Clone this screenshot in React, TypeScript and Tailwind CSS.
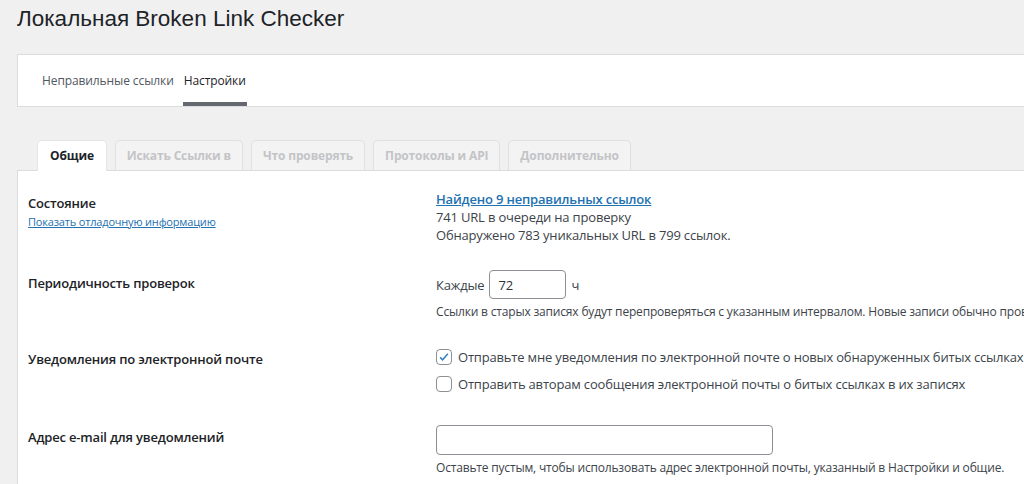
import React from "react";

const font = { fontFamily: '"Open Sans", "Noto Sans", sans-serif' };

export default function App() {
  return (
    <div className="min-h-[484px] w-[1024px] overflow-hidden bg-[#f0f0f1] text-[#3c434a]" style={font}>
      <div className="pl-[17px] pt-[4px]">
        <h1 className="text-[22.5px] leading-[29px] text-[#1d2327] font-normal" style={{ fontFamily: '"Liberation Sans", Arial, sans-serif' }}>
          Локальная Broken Link Checker
        </h1>
        <div className="mt-[21px] h-[53px] border-y border-l border-[#dcdcde] bg-white flex items-end pl-[24px] gap-[10px] text-[12px]">
          <div className="h-full flex items-center pt-[1px] text-[#50575e] tracking-[-0.1px]">Неправильные ссылки</div>
          <div className="h-full flex flex-col justify-between">
            <div className="flex-1 flex items-center pt-[5px] text-[#1d2327] tracking-[-0.1px]">Настройки</div>
            <div className="h-[4px] bg-[#646970] -mx-[1px]" />
          </div>
        </div>

        <div className="mt-[33px] flex items-end gap-[8px] pl-[20px] text-[12px] font-bold relative z-10 tracking-[-0.15px]">
          <div className="h-[31px] px-[12px] rounded-t-[5px] bg-white border border-b-0 border-[#e5e5e5] text-[#1d2327] flex items-center -mb-px">Общие</div>
          {["Искать Ссылки в", "Что проверять", "Протоколы и API", "Дополнительно"].map((t) => (
            <div key={t} className="h-[30px] px-[11px] rounded-t-[5px] bg-[#f3f3f3] border border-b-0 border-[#e0e0e0] text-[#c3c4c7] flex items-center">
              {t}
            </div>
          ))}
        </div>

        <div className="bg-white border-t border-l border-[#dcdcde] h-[320px] pl-[10px] pt-[19px] text-[13px] leading-[18px] tracking-[-0.18px]">
          {/* Состояние */}
          <div className="flex">
            <div className="w-[408px] shrink-0 pt-[4px]">
              <div className="font-semibold text-[#1d2327] text-[13px]">Состояние</div>
              <a className="text-[11px] text-[#2271b1] underline leading-[15px]" href="#">Показать отладочную информацию</a>
            </div>
            <div>
              <a className="font-semibold text-[#2271b1] underline" href="#">Найдено 9 неправильных ссылок</a>
              <div>741 URL в очереди на проверку</div>
              <div>Обнаружено 783 уникальных URL в 799 ссылок.</div>
            </div>
          </div>

          {/* Периодичность */}
          <div className="flex mt-[26px]">
            <div className="w-[408px] shrink-0 pt-[4px] font-semibold text-[#1d2327]">Периодичность проверок</div>
            <div className="min-w-0">
              <div className="flex items-center h-[29px]">
                <span>Каждые</span>
                <div className="ml-[5px] w-[77px] h-[29px] border border-[#8c8f94] rounded-[4px] flex items-center px-[8px] text-[#2c3338]">72</div>
                <span className="ml-[5px]">ч</span>
              </div>
              <div className="mt-[4px] text-[12px] whitespace-nowrap">
                Ссылки в старых записях будут перепроверяться с указанным интервалом. Новые записи обычно проверяются немедленно.
              </div>
            </div>
          </div>

          {/* Уведомления */}
          <div className="flex mt-[27px]">
            <div className="w-[408px] shrink-0 pt-[2px] font-semibold text-[#1d2327]">Уведомления по электронной почте</div>
            <div className="flex flex-col gap-[9px] whitespace-nowrap">
              <div className="flex items-center gap-[6px]">
                <span className="w-[16px] h-[16px] border border-[#8c8f94] rounded-[4px] flex items-center justify-center bg-white">
                  <svg viewBox="0 0 20 20" className="w-[18px] h-[18px]">
                    <path d="M4.5 10.5 L8 14 L15.5 5.5" fill="none" stroke="#3582c4" strokeWidth="2.2" />
                  </svg>
                </span>
                <span>Отправьте мне уведомления по электронной почте о новых обнаруженных битых ссылках</span>
              </div>
              <div className="flex items-center gap-[6px]">
                <span className="w-[16px] h-[16px] border border-[#8c8f94] rounded-[4px] bg-white" />
                <span>Отправить авторам сообщения электронной почты о битых ссылках в их записях</span>
              </div>
            </div>
          </div>

          {/* Адрес */}
          <div className="flex mt-[32px]">
            <div className="w-[408px] shrink-0 pt-[3px] font-semibold text-[#1d2327]">Адрес e-mail для уведомлений</div>
            <div>
              <div className="w-[337px] h-[30px] border border-[#8c8f94] rounded-[4px]" />
              <div className="mt-[4px] text-[12px] whitespace-nowrap">
                Оставьте пустым, чтобы использовать адрес электронной почты, указанный в Настройки и общие.
              </div>
            </div>
          </div>
        </div>
      </div>
    </div>
  );
}
